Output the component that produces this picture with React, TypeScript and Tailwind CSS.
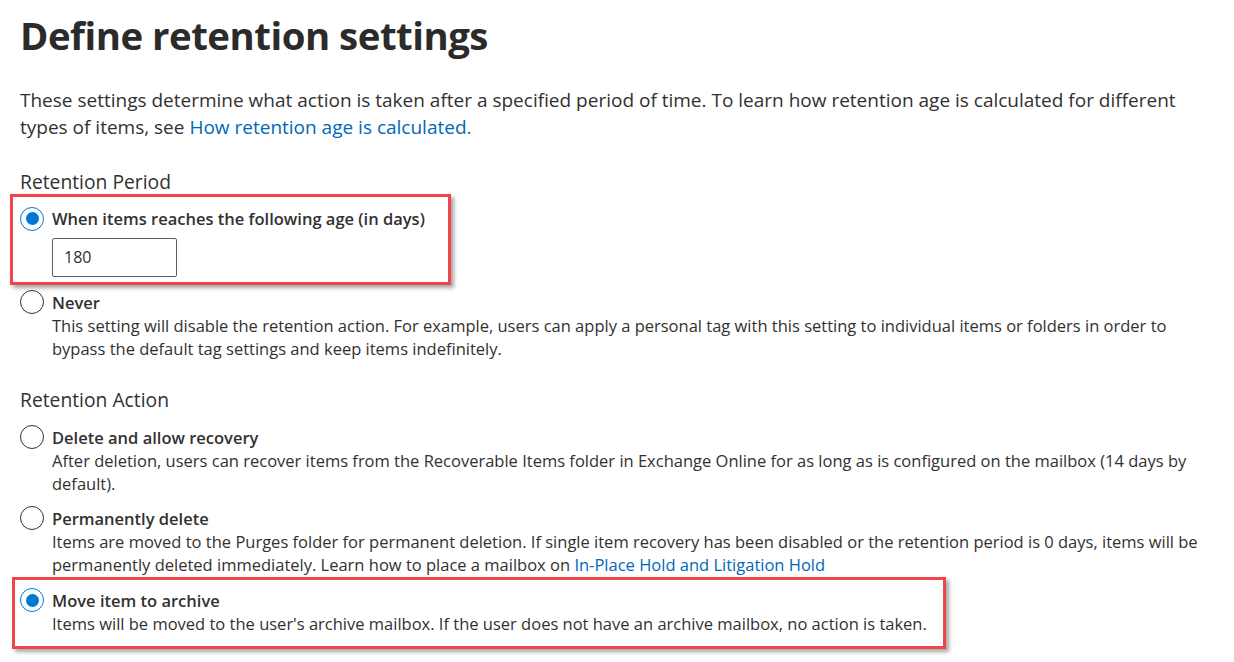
import React from 'react';

interface OptionProps {
  label: string;
  checked?: boolean;
  children?: React.ReactNode;
}

const Radio = ({ checked }: { checked?: boolean }) => (
  <span
    className={
      'mt-[-0.5px] flex h-[24px] w-[24px] shrink-0 items-center justify-center rounded-full border bg-white ' +
      (checked ? 'border-[#0078d4]' : 'border-[#323130]')
    }
  >
    {checked && <span className="h-[13px] w-[13px] rounded-full bg-[#0078d4]" />}
  </span>
);

function Option({ label, checked, children }: OptionProps) {
  return (
    <div className="flex gap-[8px]">
      <Radio checked={checked} />
      <div className="flex-1">
        <div className="text-[16.5px] font-semibold leading-[23px]">{label}</div>
        {children && <div className="text-[16.5px] leading-[23px]">{children}</div>}
      </div>
    </div>
  );
}

// red annotation frame drawn over the screenshot
const Highlight = ({ className }: { className: string }) => (
  <div
    className={
      'pointer-events-none absolute border-[3px] border-[#f2454a] shadow-[3px_3px_4px_rgba(0,0,0,0.35)] ' + className
    }
  />
);

export default function App() {
  return (
    <div
      className="min-h-[662px] w-[1234px] bg-white px-[20px] text-[#323130]"
      style={{ fontFamily: '"Segoe UI", "Open Sans", sans-serif' }}
    >
      <h1 className="pt-[9px] text-[38.4px] font-bold leading-[52px] tracking-[-0.5px] text-[#2b2b2b]">
        Define retention settings
      </h1>

      <p className="mt-[26px] max-w-[1160px] text-[19px] leading-[27px]">
        These settings determine what action is taken after a specified period of time. To learn how retention age is
        calculated for different types of items, see{' '}
        <a href="#" className="text-[#0067b8]">
          How retention age is calculated.
        </a>
      </p>

      <h2 className="mt-[27px] text-[19.3px] leading-[27px]">Retention Period</h2>

      <div className="relative mt-[12px]">
        <Highlight className="-left-[10px] -top-[13px] h-[91px] w-[441px]" />
        <Option label="When items reaches the following age (in days)" checked />
        <div className="ml-[32px] mt-[7px] flex h-[39px] w-[125px] items-center rounded-[2px] border border-[#605e5c] px-[11px] text-[16px]">
          180
        </div>
      </div>

      <div className="mt-[14px]">
        <Option label="Never">
          This setting will disable the retention action. For example, users can apply a personal tag with this setting
          to individual items or folders in order to bypass the default tag settings and keep items indefinitely.
        </Option>
      </div>

      <h2 className="mt-[26px] text-[19.3px] leading-[27px]">Retention Action</h2>

      <div className="mt-[13px] flex flex-col gap-[12px]">
        <Option label="Delete and allow recovery">
          After deletion, users can recover items from the Recoverable Items folder in Exchange Online for as long as is
          configured on the mailbox (14 days by default).
        </Option>
        <Option label="Permanently delete">
          Items are moved to the Purges folder for permanent deletion. If single item recovery has been disabled or the
          retention period is 0 days, items will be permanently deleted immediately. Learn how to place a mailbox on{' '}
          <a href="#" className="text-[#0067b8]">
            In-Place Hold and Litigation Hold
          </a>
        </Option>
        <div className="relative mt-[1px]">
          <Highlight className="-left-[8px] -top-[12px] h-[72px] w-[934px]" />
          <Option label="Move item to archive" checked>
            Items will be moved to the user's archive mailbox. If the user does not have an archive mailbox, no action is
            taken.
          </Option>
        </div>
      </div>
    </div>
  );
}
